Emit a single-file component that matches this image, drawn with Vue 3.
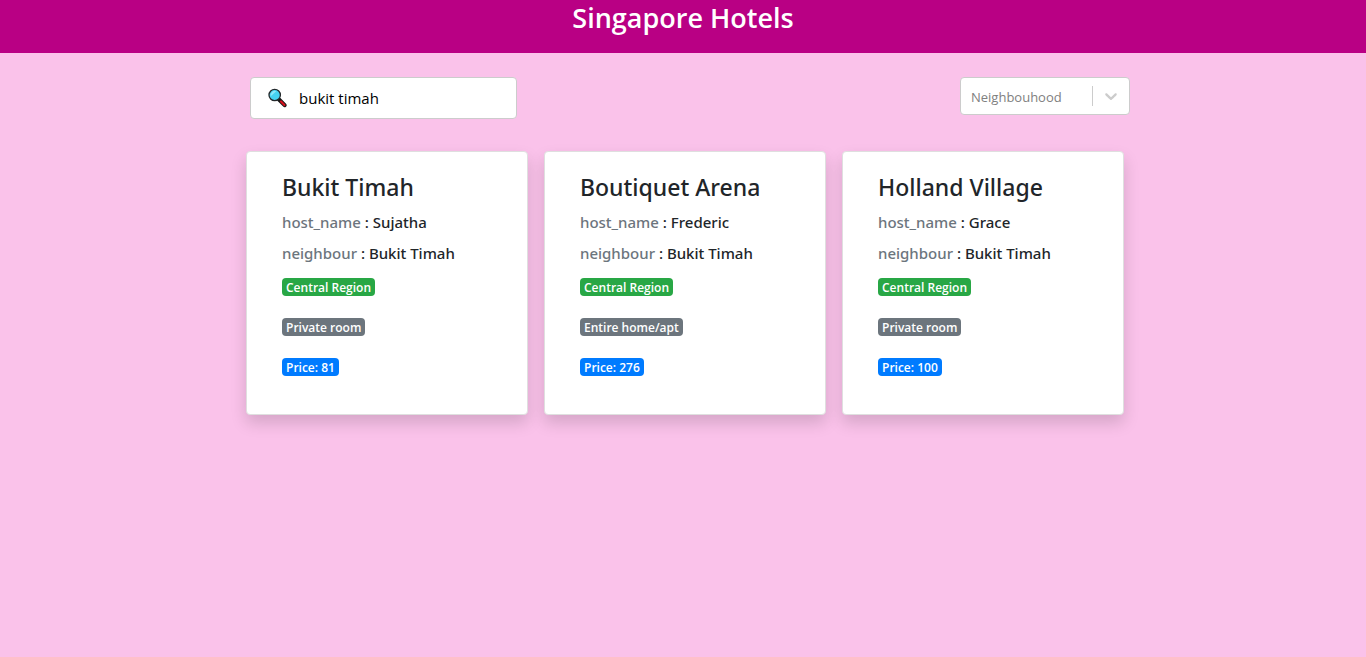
<script setup>
import { ref } from 'vue'

const query = ref('bukit timah')
const area = ref('')

const hotels = [
  { name: 'Bukit Timah', host: 'Sujatha', neighbour: 'Bukit Timah', region: 'Central Region', room: 'Private room', price: 81 },
  { name: 'Boutiquet Arena', host: 'Frederic', neighbour: 'Bukit Timah', region: 'Central Region', room: 'Entire home/apt', price: 276 },
  { name: 'Holland Village', host: 'Grace', neighbour: 'Bukit Timah', region: 'Central Region', room: 'Private room', price: 100 },
]
</script>

<template>
  <header class="banner">
    <h1>Singapore Hotels</h1>
  </header>
  <main class="content">
    <div class="toolbar">
      <div class="search">
        <label for="search" aria-label="Search hotels">
          <svg width="20" height="20" viewBox="0 0 20 20" aria-hidden="true">
            <path d="M12 11.5 17.6 17.2" stroke="#161616" stroke-width="4" stroke-linecap="round" />
            <path d="M14 13.5 17.4 17" stroke="#d8101c" stroke-width="2.2" stroke-linecap="round" />
            <circle cx="7.7" cy="7" r="5.7" fill="#45d3f2" stroke="#24282b" stroke-width="1.3" />
            <path d="M3.7 8.2A4.2 4.2 0 0 1 9.3 3.2Z" fill="#8ce8fb" />
          </svg>
        </label>
        <input id="search" v-model="query" type="text" />
      </div>
      <div class="picker">
        <select v-model="area" aria-label="Neighbouhood">
          <option value="">Neighbouhood</option>
          <option value="Bukit Timah">Bukit Timah</option>
        </select>
        <span class="arrow">
          <svg width="20" height="20" viewBox="0 0 20 20" aria-hidden="true">
            <path d="M4.516 7.548c0.436-0.446 1.043-0.481 1.576 0l3.908 3.747 3.908-3.747c0.533-0.481 1.141-0.446 1.574 0 0.436 0.445 0.408 1.197 0 1.615-0.406 0.418-4.695 4.502-4.695 4.502-0.217 0.223-0.502 0.335-0.787 0.335s-0.57-0.112-0.789-0.335c0 0-4.287-4.084-4.695-4.502s-0.436-1.17 0-1.615z" fill="#ccc" />
          </svg>
        </span>
      </div>
    </div>
    <section class="cards">
      <article v-for="hotel in hotels" :key="hotel.name" class="card">
        <h2>{{ hotel.name }}</h2>
        <p><span class="muted">host_name</span> : {{ hotel.host }}</p>
        <p><span class="muted">neighbour</span> : {{ hotel.neighbour }}</p>
        <div class="badges">
          <span class="badge green">{{ hotel.region }}</span>
          <span class="badge gray">{{ hotel.room }}</span>
          <span class="badge blue">Price: {{ hotel.price }}</span>
        </div>
      </article>
    </section>
  </main>
</template>

<style>
body {
  margin: 0;
  background: #fac2ea;
  color: #212529;
  font-family: "Open Sans", "Noto Sans", sans-serif;
}
</style>

<style scoped>
* {
  box-sizing: border-box;
}
.banner {
  padding-bottom: 16px;
  background: #b90084;
  color: #fff;
  text-align: center;
}
h1 {
  margin: 0;
  font-size: 27px;
  font-weight: 600;
  line-height: 36px;
  padding-bottom: 1px;
}
.content {
  max-width: 894px;
  margin: 0 auto;
  padding: 24px 0 40px 10px;
}
.toolbar {
  display: flex;
  justify-content: space-between;
  align-items: flex-start;
  margin-bottom: 32px;
  padding-left: 4px;
}
.search {
  display: flex;
  align-items: center;
  width: 267px;
  height: 42px;
  padding: 0 16px;
  border: 1px solid #ccc;
  border-radius: 4px;
  background: #fff;
}
.search label {
  display: flex;
}
.search input {
  flex: 1;
  min-width: 0;
  margin-left: 12px;
  padding: 0;
  border: 0;
  outline: 0;
  background: none;
  color: #000;
  font: 15px/24px "Open Sans", "Noto Sans", sans-serif;
}
.picker {
  display: flex;
  position: relative;
  width: 170px;
  height: 38px;
}
.picker select {
  width: 100%;
  padding: 2px 40px 0 10px;
  border: 1px solid #ccc;
  border-radius: 4px;
  appearance: none;
  background: #fff;
  color: #808080;
  font: 13px/20px "Open Sans", "Noto Sans", sans-serif;
}
.arrow {
  position: absolute;
  top: 9px;
  right: 1px;
  display: flex;
  padding: 0 8px;
  border-left: 1px solid #ccc;
  pointer-events: none;
}
.cards {
  display: grid;
  grid-template-columns: repeat(3, 1fr);
  gap: 16px;
  padding-right: 6px;
}
.card {
  padding: 21px 20px 38px 35px;
  border: 1px solid #dfdfdf;
  border-radius: 4px;
  background: #fff;
  box-shadow: 0 8px 16px rgba(0, 0, 0, 0.15);
}
h2 {
  margin: 0 0 8px;
  font-family: "Noto Sans", "Open Sans", sans-serif;
  font-size: 23px;
  font-weight: 500;
  line-height: 29px;
}
p {
  margin: 0 0 7px;
  font-family: "Noto Sans", "Open Sans", sans-serif;
  font-size: 15px;
  font-weight: 500;
  line-height: 24px;
}
.muted {
  color: #6c757d;
}
.badges {
  display: flex;
  flex-direction: column;
  align-items: flex-start;
  gap: 22px;
  padding-top: 6px;
}
.badge {
  padding: 1px 4px 0;
  border-radius: 4px;
  color: #fff;
  font-size: 12px;
  font-weight: 600;
  line-height: 17px;
}
.green {
  background: #28a745;
}
.gray {
  background: #6c757d;
}
.blue {
  background: #007bff;
}
@media (max-width: 820px) {
  .cards {
    grid-template-columns: 1fr;
  }
}
</style>
